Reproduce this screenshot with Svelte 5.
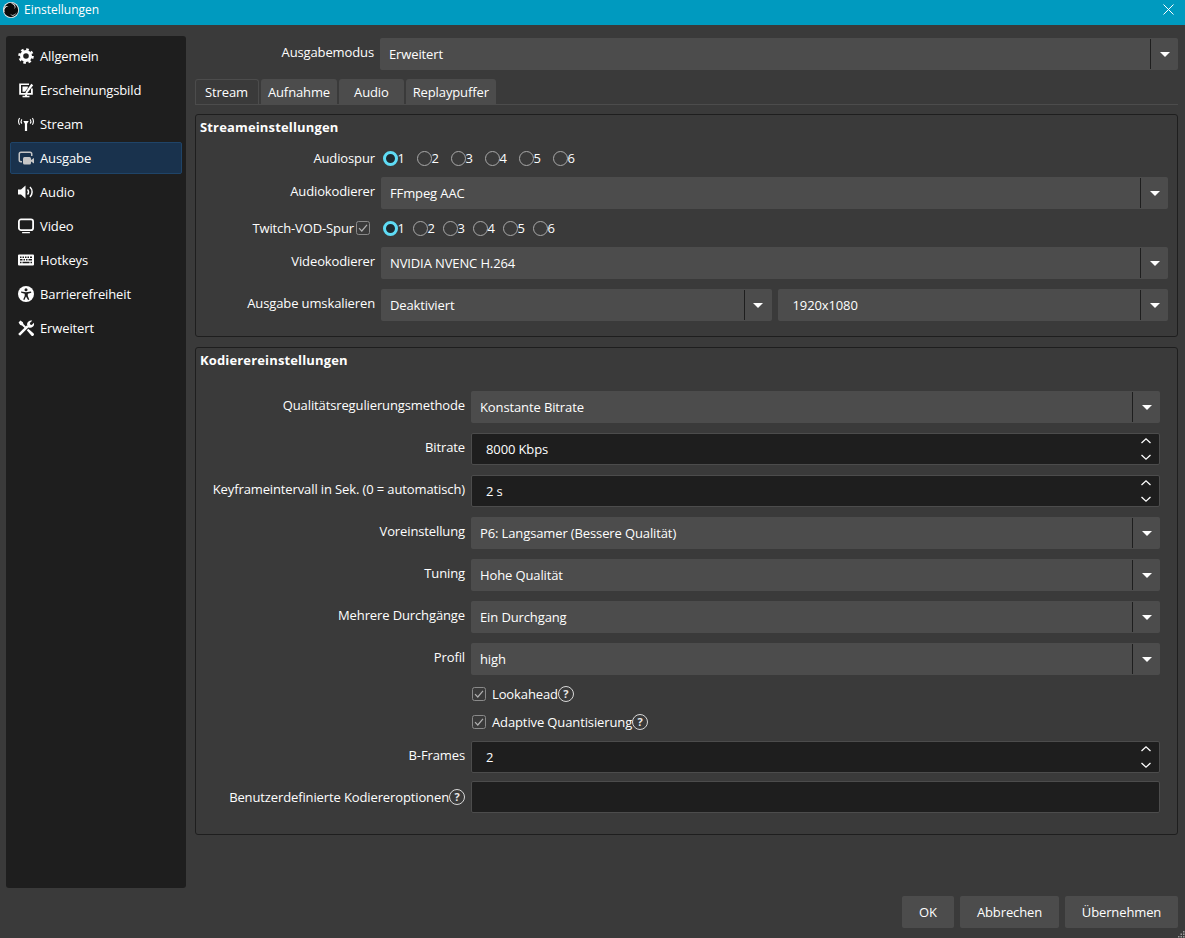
<script>
  const nav = ["Allgemein", "Erscheinungsbild", "Stream", "Ausgabe", "Audio", "Video", "Hotkeys", "Barrierefreiheit", "Erweitert"];
  const tabs = ["Stream", "Aufnahme", "Audio", "Replaypuffer"];
  const tracks = [1, 2, 3, 4, 5, 6];

  const encoder = [
    { label: "Qualitätsregulierungsmethode", type: "combo", value: "Konstante Bitrate" },
    { label: "Bitrate", type: "spin", value: "8000 Kbps" },
    { label: "Keyframeintervall in Sek. (0 = automatisch)", type: "spin", value: "2 s" },
    { label: "Voreinstellung", type: "combo", value: "P6: Langsamer (Bessere Qualität)" },
    { label: "Tuning", type: "combo", value: "Hohe Qualität" },
    { label: "Mehrere Durchgänge", type: "combo", value: "Ein Durchgang" },
    { label: "Profil", type: "combo", value: "high" }
  ];
</script>

{#snippet combo(value, cls = "")}
  <div class="combo {cls}">
    <span class="combo-text">{value}</span>
    <span class="combo-btn"><i class="arrow"></i></span>
  </div>
{/snippet}

{#snippet spin(value)}
  <div class="spin">
    <span>{value}</span>
    <svg class="spin-arrows" width="14" height="26" viewBox="0 0 14 26" fill="none" stroke="#fefefe" stroke-width="1.3">
      <path d="M2.500 7 7 2.800 11.500 7" />
      <path d="M2.500 19 7 23.200 11.500 19" />
    </svg>
  </div>
{/snippet}

{#snippet check()}
  <svg class="check" width="14" height="14" viewBox="0 0 14 14" fill="none">
    <rect x=".5" y=".5" width="13" height="13" rx="2" stroke="#8a8a8a" />
    <path d="M3 7.200 5.800 10 11 3.800" stroke="#b0b0b0" stroke-width="1.200" />
  </svg>
{/snippet}

{#snippet help()}
  <span class="help">?</span>
{/snippet}

{#snippet radios(gapClass)}
  <div class="radios {gapClass}">
    {#each tracks as t}
      <div class="radio-item">
        <i class="radio" class:on={t === 1}></i><span>{t}</span>
      </div>
    {/each}
  </div>
{/snippet}

{#snippet navIcon(i)}
  <svg class="nav-icon" width="16" height="16" viewBox="0 0 16 16" fill="#fefefe" stroke="none">
    {#if i === 0}
      <circle cx="8" cy="8" r="4.400" fill="none" stroke="#fefefe" stroke-width="3.200" />
      <circle cx="8" cy="8" r="6.600" fill="none" stroke="#fefefe" stroke-width="2.400" stroke-dasharray="2.590 2.590" />
    {:else if i === 1}
      <path fill-rule="evenodd" d="M1.500 1.500H11V3H3v8h10V6.500h1.800v6.300H1.200V1.500z" />
      <rect x="4.500" y="13.800" width="7" height="1.500" />
      <rect x="7" y="12.500" width="2" height="2" />
      <path d="M4.500 4.500h5.300v1.400L7 9.800H4.500z" />
      <path d="M7.800 9.800 13.300 1.800 15.200 3.200 9.600 10.800l-2 .6z" />
    {:else if i === 2}
      <path d="M5.300 5h5.400L9.100 7.800V15H6.900V7.800z" />
      <g fill="none" stroke="#fefefe" stroke-width="1.100">
        <path d="M3.800 3.200a4 4 0 0 0 0 4.400M12.200 3.200a4 4 0 0 1 0 4.400" />
        <path d="M1.600 2a6.500 6.500 0 0 0 0 6.800M14.400 2a6.500 6.500 0 0 1 0 6.800" />
      </g>
    {:else if i === 3}
      <g fill="#c6c6c6">
        <path fill-rule="evenodd" d="M3 1.500h9A2.500 2.500 0 0 1 14.500 4v2h-1.500V4a1 1 0 0 0-1-1H3a1 1 0 0 0-1 1v6a1 1 0 0 0 1 1h1v1.500H3A2.500 2.500 0 0 1 .5 10V4A2.500 2.500 0 0 1 3 1.500z" />
        <rect x="5" y="7" width="8" height="7.500" rx="1.500" />
        <path d="M13 10l3-2v5.500l-3-2z" />
      </g>
    {:else if i === 4}
      <path d="M0 5.500h3L7.500 1.500v13L3 10.500H0z" />
      <g fill="none" stroke="#fefefe" stroke-width="1.500">
        <path d="M9.500 5.500a3.500 3.500 0 0 1 0 5" />
        <path d="M12 3a7 7 0 0 1 0 10" />
      </g>
    {:else if i === 5}
      <rect x=".9" y="1.400" width="14.200" height="10.700" rx="2.200" fill="none" stroke="#fefefe" stroke-width="1.800" />
      <rect x="4" y="14" width="8" height="1.300" rx=".6" />
    {:else if i === 6}
      <path fill-rule="evenodd" d="M1 2.500h14a1 1 0 0 1 1 1v9a1 1 0 0 1-1 1H1a1 1 0 0 1-1-1v-9a1 1 0 0 1 1-1zM2 4.500v1.500h1.500V4.500zM4.500 4.500v1.500H6V4.500zM7 4.500v1.500h1.500V4.500zM9.500 4.500v1.500H11V4.500zM12 4.500v1.500h2V4.500zM2 7v1.500h2.500V7zM5.500 7v1.500H7V7zM8 7v1.500h1.500V7zM10.500 7v1.500H14V7zM2 9.800v1.500h1.500V9.800zM4.500 9.800v1.500h7V9.800zM12.500 9.800v1.500H14V9.800z" />
    {:else if i === 7}
      <circle cx="8" cy="8" r="8" />
      <g fill="#1e1e1e">
        <circle cx="8" cy="3.800" r="1.500" />
        <path d="M3 5.500 8 6.300l5-.8.300 1.300-3.500.9v2.300l1.500 3.600-1.200.5L8 10.500l-1.600 3.600-1.200-.5 1.500-3.600V7.700l-3.500-.9z" />
      </g>
    {:else}
      <path d="M2 15.800.2 14 9 5.200 10.800 7z" />
      <path d="M9.700 6.500A4 4 0 0 1 10.500 1.500c1.100-.9 2.600-1.200 3.700-.7L11.800 3.100l.4 1.500 1.500.4L16 2.700a4 4 0 0 1-5.400 4.700z" />
      <path d="M.6 2.400 2.400.6 4.900 2.200 5.400 4 8.800 7.400 7.400 8.800 4 5.400 2.200 4.900z" />
      <path d="M8.800 10.200l1.500-1.500 5.400 4.800a1.600 1.600 0 0 1-2.200 2.200z" />
    {/if}
  </svg>
{/snippet}

<div class="window">
  <header class="titlebar">
    <svg class="logo" width="16" height="16" viewBox="0 0 16 16">
      <circle cx="8" cy="8" r="8" fill="#f0f0f0" />
      <circle cx="8" cy="8" r="7.200" fill="#0b0b0b" />
      <path d="M7.600 1.800a3.300 3.300 0 0 1 3.800 5.300A3.700 3.700 0 0 0 7.600 1.800z" fill="#f0f0f0" />
      <path d="M2.300 10.600a3.300 3.300 0 0 1 3.400-6A3.700 3.700 0 0 0 2.300 10.600z" fill="#f0f0f0" />
      <path d="M13.400 10.300a3.300 3.300 0 0 1-6.300 1.400 3.700 3.700 0 0 0 6.300-1.400z" fill="#f0f0f0" />
    </svg>
    <span class="title">Einstellungen</span>
    <svg class="close" width="11" height="11" viewBox="0 0 11 11" stroke="#fff" stroke-width="1" fill="none">
      <path d="M.5.500 10.500 10.500M10.500.500 .5 10.500" />
    </svg>
  </header>

  <div class="body">
    <aside class="sidebar">
      {#each nav as item, i}
        <div class="nav-item" class:active={item === "Ausgabe"}>
          {@render navIcon(i)}
          <span>{item}</span>
        </div>
      {/each}
    </aside>

    <main class="content">
      <div class="mode-row">
        <div class="mode-label">Ausgabemodus</div>
        {@render combo("Erweitert")}
      </div>

      <div class="tabs">
        {#each tabs as t, i}
          <div class="tab" class:selected={i === 0}>{t}</div>
        {/each}
      </div>

      <section class="group stream">
        <h3>Streameinstellungen</h3>
        <div class="s-row r-radio">
          <div class="s-label">Audiospur</div>
          {@render radios("wide")}
        </div>
        <div class="s-row r-combo">
          <div class="s-label lift">Audiokodierer</div>
          {@render combo("FFmpeg AAC")}
        </div>
        <div class="s-row r-radio2">
          <div class="s-label twitch">Twitch-VOD-Spur{@render check()}</div>
          {@render radios("narrow")}
        </div>
        <div class="s-row r-combo">
          <div class="s-label lift">Videokodierer</div>
          {@render combo("NVIDIA NVENC H.264")}
        </div>
        <div class="s-row r-combo last">
          <div class="s-label lift">Ausgabe umskalieren</div>
          <div class="pair">
            {@render combo("Deaktiviert")}
            {@render combo("1920x1080", "indent")}
          </div>
        </div>
      </section>

      <section class="group encoder">
        <h3>Kodierereinstellungen</h3>
        <div class="e-rows">
          {#each encoder as row}
            <div class="e-row">
              <div class="e-label">{row.label}</div>
              {#if row.type === "combo"}
                {@render combo(row.value)}
              {:else}
                {@render spin(row.value)}
              {/if}
            </div>
          {/each}
          <div class="e-check">
            {@render check()}<span>Lookahead</span>{@render help()}
          </div>
          <div class="e-check">
            {@render check()}<span>Adaptive Quantisierung</span>{@render help()}
          </div>
          <div class="e-row">
            <div class="e-label">B-Frames</div>
            {@render spin("2")}
          </div>
          <div class="e-row">
            <div class="e-label">Benutzerdefinierte Kodiereroptionen{@render help()}</div>
            <div class="textfield"></div>
          </div>
        </div>
      </section>
    </main>
  </div>

  <footer class="footer">
    <button class="b-ok">OK</button>
    <button class="b-cancel">Abbrechen</button>
    <button class="b-apply">Übernehmen</button>
    <svg class="grip" width="7" height="7" viewBox="0 0 7 7" fill="#9a9a9a">
      <rect x="5" y="0" width="1.500" height="1.500" />
      <rect x="2.500" y="2.500" width="1.500" height="1.500" />
      <rect x="5" y="2.500" width="1.500" height="1.500" />
      <rect x="0" y="5" width="1.500" height="1.500" />
      <rect x="2.500" y="5" width="1.500" height="1.500" />
      <rect x="5" y="5" width="1.500" height="1.500" />
    </svg>
  </footer>
</div>

<style>
  :global(body) {
    background: #3a3a3a;
  }

  .window {
    width: 1185px;
    height: 938px;
    display: flex;
    flex-direction: column;
    background: #3a3a3a;
    color: #fefefe;
    font-family: "Open Sans", "Liberation Sans", sans-serif;
    font-size: 13px;
    line-height: 18px;
    letter-spacing: -0.12px;
    overflow: hidden;
    position: relative;
  }

  .titlebar {
    height: 25px;
    flex: none;
    background: #009abf;
    display: flex;
    align-items: center;
    padding: 0 11px 0 3px;
  }
  .logo {
    margin-top: -6px;
  }
  .title {
    margin-left: 5px;
    font-size: 12px;
    margin-top: -5px;
    flex: 1;
    letter-spacing: 0;
  }
  .close {
    margin-top: -6px;
  }

  .body {
    display: flex;
    padding: 11px 7px 0 6px;
    height: 863px;
    flex: none;
    box-sizing: border-box;
    gap: 9px;
  }

  .sidebar {
    width: 180px;
    flex: none;
    height: 852px;
    background: #1e1e1e;
    border-radius: 3px;
    padding: 4px;
    box-sizing: border-box;
  }
  .nav-item {
    height: 32px;
    margin-bottom: 2px;
    display: flex;
    align-items: center;
    padding-left: 7px;
    box-sizing: border-box;
    border-radius: 2px;
    border: 1px solid transparent;
  }
  .nav-item span {
    margin-left: 6px;
  }
  .nav-item.active {
    background: #19324d;
    border-color: #1f4468;
  }
  .nav-icon {
    flex: none;
  }

  .content {
    flex: 1;
    min-width: 0;
  }

  .mode-row {
    display: flex;
    align-items: center;
    margin-top: 2px;
    height: 32px;
  }
  .mode-label {
    width: 179px;
    text-align: right;
    margin-right: 6px;
    padding-bottom: 4px;
    flex: none;
  }

  .combo {
    flex: 1;
    min-width: 0;
    height: 32px;
    background: #4c4c4c;
    border-radius: 2px;
    display: flex;
    align-items: center;
    box-sizing: border-box;
    padding-left: 9px;
  }
  .combo.indent {
    padding-left: 15px;
  }
  .combo-text {
    flex: 1;
  }
  .combo-btn {
    width: 27px;
    height: 30px;
    flex: none;
    border-left: 1px solid #1e1e1e;
    display: flex;
    align-items: center;
    justify-content: center;
  }
  .arrow {
    width: 0;
    height: 0;
    border-left: 5px solid transparent;
    border-right: 5px solid transparent;
    border-top: 5px solid #fefefe;
  }

  .spin {
    flex: 1;
    height: 32px;
    background: #1e1e1e;
    border: 1px solid #4c4c4c;
    border-radius: 2px;
    box-sizing: border-box;
    display: flex;
    align-items: center;
    justify-content: space-between;
    padding: 0 6px 0 14px;
  }
  .textfield {
    flex: 1;
    height: 32px;
    background: #1e1e1e;
    border: 1px solid #4c4c4c;
    border-radius: 2px;
    box-sizing: border-box;
  }

  .tabs {
    display: flex;
    gap: 2px;
    margin-top: 9px;
    height: 26px;
    box-sizing: border-box;
    border-bottom: 1px solid #4c4c4c;
  }
  .tab {
    height: 25px;
    padding: 0 7px;
    background: #4c4c4c;
    border-radius: 3px 3px 0 0;
    display: flex;
    align-items: center;
    box-sizing: border-box;
  }
  .tab:nth-child(3) {
    padding: 0 15px;
  }
  .tab.selected {
    background: #3a3a3a;
    border: 1px solid #4c4c4c;
    border-bottom: none;
    padding: 0 10px 0 9px;
  }

  .group {
    border: 1px solid #1e1e1e;
    border-radius: 3px;
    box-sizing: border-box;
  }
  .group h3 {
    margin: 0;
    font-size: 13px;
    font-weight: 700;
    line-height: 18px;
    letter-spacing: 0.15px;
    padding: 3px 0 0 4px;
  }
  .stream {
    margin-top: 9px;
    height: 223px;
    padding-right: 9px;
  }
  .encoder {
    margin-top: 10px;
    height: 488px;
    padding-right: 17px;
  }

  .s-row {
    display: flex;
    align-items: center;
  }
  .s-label {
    width: 179px;
    margin-right: 6px;
    text-align: right;
    flex: none;
  }
  .s-label.lift {
    padding-bottom: 4px;
  }
  .r-radio {
    height: 18px;
    margin-top: 13px;
  }
  .r-combo {
    margin-top: 10px;
  }
  .r-radio2 {
    height: 18px;
    margin-top: 10px;
  }
  .twitch {
    display: flex;
    align-items: center;
    justify-content: flex-end;
    padding-right: 5px;
    box-sizing: border-box;
  }
  .twitch :global(svg) {
    margin-left: 2px;
  }
  .pair {
    flex: 1;
    display: grid;
    grid-template-columns: 1fr 1fr;
    gap: 6px;
  }

  .radios {
    display: flex;
    margin-left: 1.5px;
  }
  .radios.wide {
    gap: 12px;
  }
  .radios.narrow {
    gap: 8px;
  }
  .radio-item {
    display: flex;
    align-items: center;
    width: 22px;
  }
  .radio {
    width: 15px;
    height: 15px;
    box-sizing: border-box;
    border-radius: 50%;
    border: 1px solid #a8a8a8;
    flex: none;
  }
  .radio.on {
    border: 3px solid #5fdcf5;
    background: #1e2a30;
  }

  .e-rows {
    padding-top: 22px;
    display: flex;
    flex-direction: column;
    gap: 10px;
  }
  .e-row {
    display: flex;
    align-items: center;
  }
  .e-label {
    width: 269px;
    margin-right: 6px;
    text-align: right;
    flex: none;
    padding-bottom: 4px;
    display: flex;
    align-items: center;
    justify-content: flex-end;
    white-space: nowrap;
  }
  .e-row:last-child {
    margin-top: -2px;
  }
  .e-row:last-child .e-label {
    padding-bottom: 0;
  }
  .e-check {
    display: flex;
    align-items: center;
    height: 18px;
    padding-left: 276px;
  }
  .e-check > span:not(.help) {
    margin-left: 6px;
  }
  .help {
    width: 16px;
    height: 16px;
    box-sizing: border-box;
    flex: none;
    border: 1.5px solid #d8d8d8;
    border-radius: 50%;
    font-size: 11px;
    font-weight: 700;
    line-height: 13px;
    letter-spacing: 0;
    text-align: center;
    color: #e8e8e8;
    display: inline-block;
  }

  .footer {
    flex: 1;
    display: flex;
    justify-content: flex-end;
    gap: 6px;
    padding: 8px 7px 0 0;
    box-sizing: border-box;
  }
  .footer button {
    height: 32px;
    background: #4c4c4c;
    border: none;
    border-radius: 2px;
    color: #fefefe;
    font: inherit;
    letter-spacing: inherit;
    padding: 0;
  }
  .b-ok {
    width: 52px;
  }
  .b-cancel {
    width: 99px;
  }
  .b-apply {
    width: 113px;
  }
  .grip {
    position: absolute;
    right: 0;
    bottom: 0;
  }
</style>
